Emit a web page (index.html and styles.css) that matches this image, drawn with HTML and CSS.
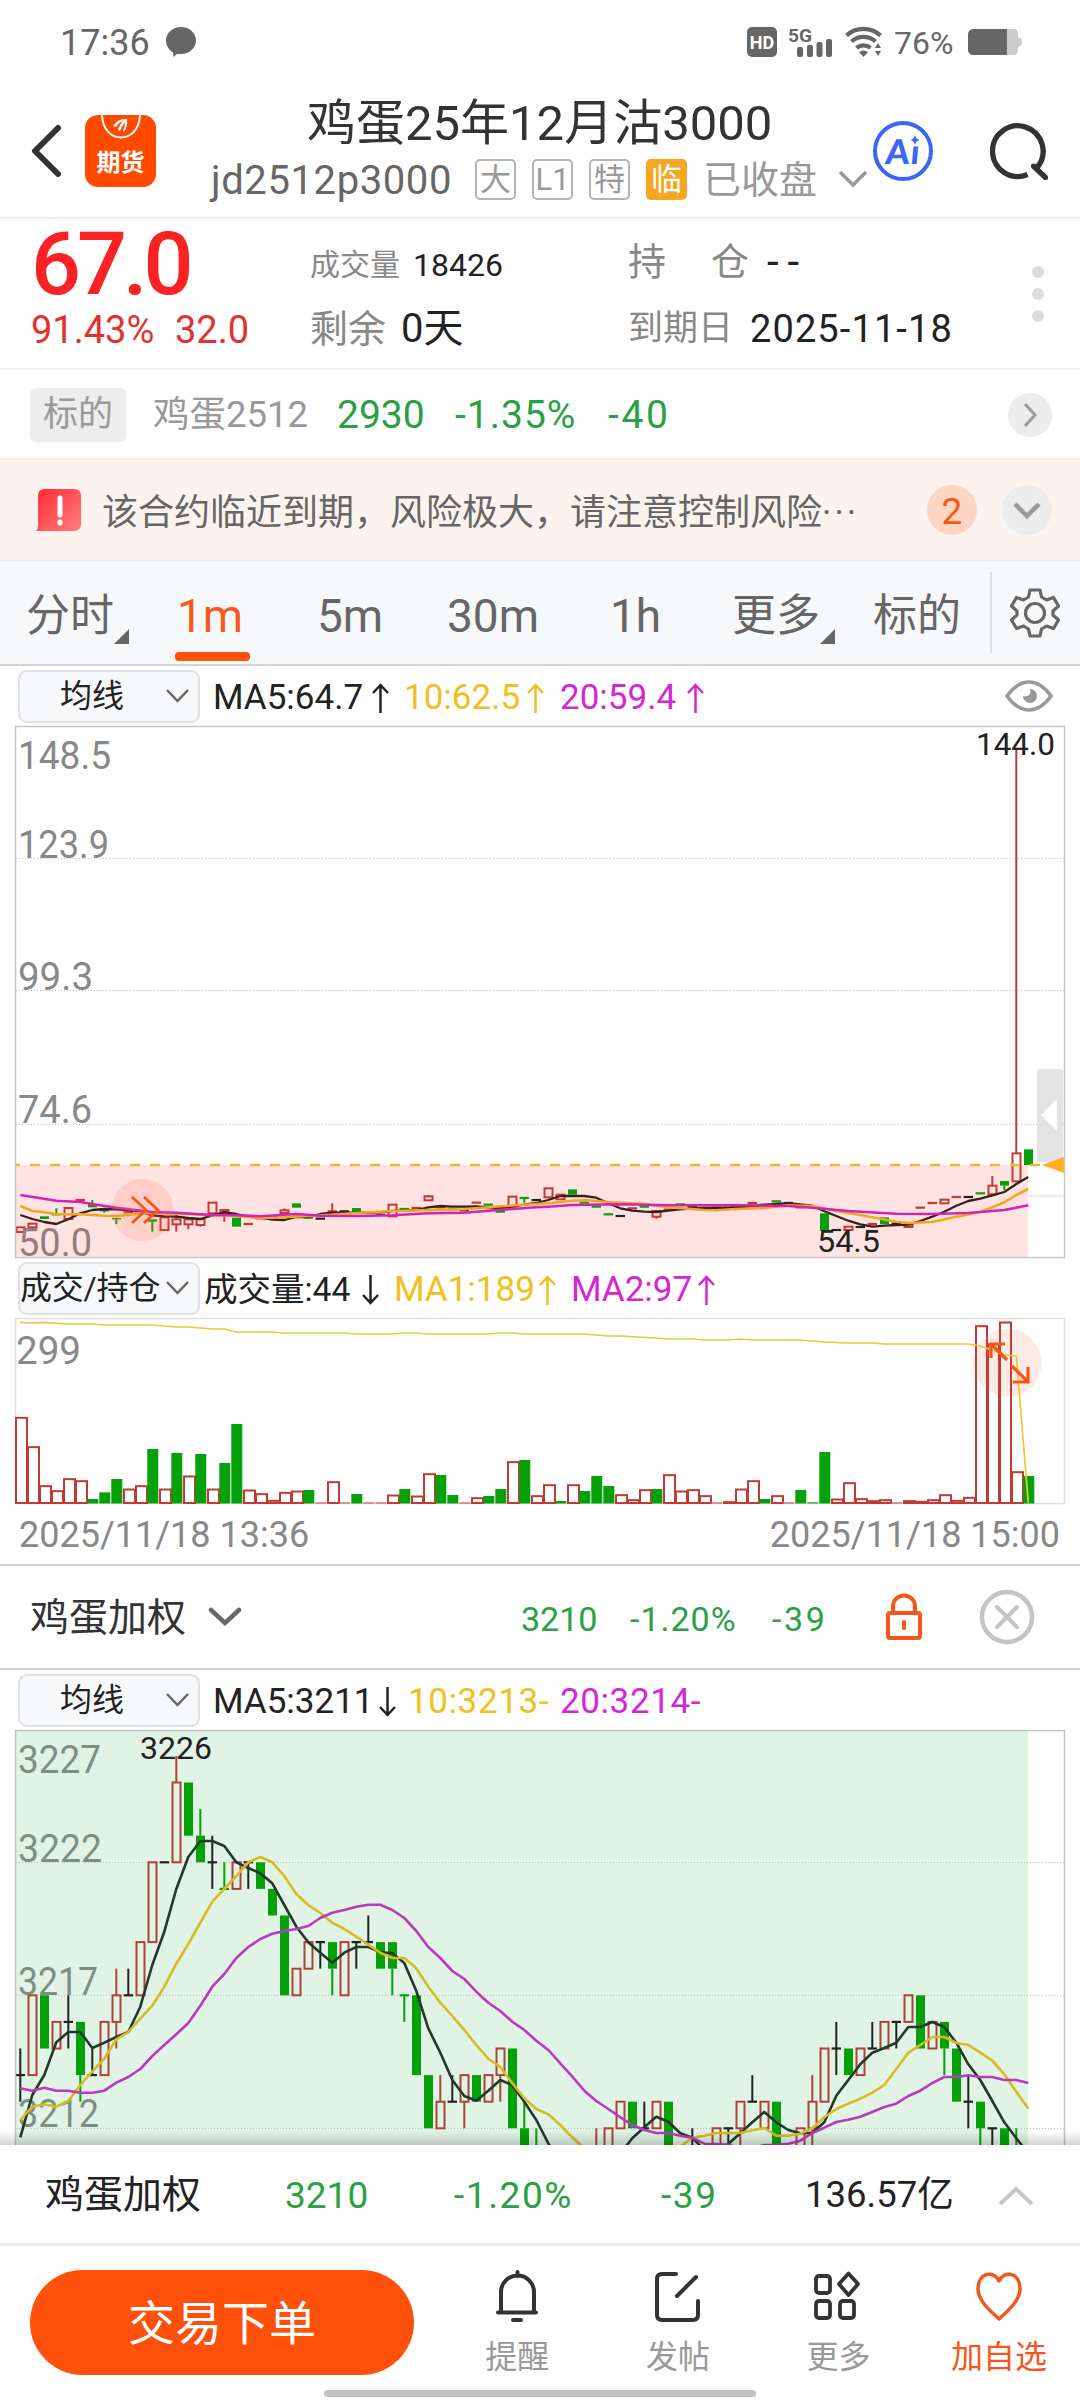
FILE: index.html
```html
<!DOCTYPE html>
<html lang="zh-CN">
<head>
<meta charset="utf-8">
<title>鸡蛋25年12月沽3000</title>
<link rel="stylesheet" href="styles.css">
</head>
<body>
<div class="status">
  <span class="clock">17:36</span>
  <svg class="bubble" width="32" height="32" viewBox="0 0 32 32"><path d="M16 1c8.300 0 15 6 15 13.500S24.300 28 16 28l-4 0-3.500 3L8 26.500C4 24 1 19.500 1 14.500 1 7 7.700 1 16 1z" fill="#666"/></svg>
  <span class="hd">HD</span>
  <svg class="signal" width="46" height="32" viewBox="0 0 46 32"><text x="0" y="16" class="g5" textLength="24" lengthAdjust="spacingAndGlyphs">5G</text><g fill="#666"><rect x="9" y="21" width="6" height="10" rx="2"/><rect x="19" y="19" width="6" height="12" rx="2"/><rect x="28.500" y="16" width="6" height="15" rx="2"/><rect x="38" y="13" width="6" height="18" rx="2"/></g></svg>
  <svg class="wifi" width="40" height="32" viewBox="0 0 40 32"><g fill="none" stroke="#666" stroke-width="4.200"><path d="M2.500 9.500a25 25 0 0 1 34 0"/><path d="M7.500 15.500a18 18 0 0 1 24 0"/><path d="M12.500 21.800a11 11 0 0 1 14 0"/></g><path d="M15 26q4.500-3 9 0l-4.500 5z" fill="#666"/><path d="M31 22l3-5 3 5zM31 25h6l-3 5z" fill="#666"/></svg>
  <span class="pct">76%</span>
  <svg class="battery" width="56" height="28" viewBox="0 0 56 28"><path d="M7 1h40q4 0 4 5v3q4 1 4 5t-4 5v3q0 5-4 5H7q-6 0-6-6V7q0-6 6-6z" fill="#ccc"/><path d="M7 1h33v26H7q-6 0-6-6V7q0-6 6-6z" fill="#666"/></svg>
</div>

<header class="header">
  <svg class="back" width="32" height="54" viewBox="0 0 32 54"><path d="M28 4L5 27l23 23" fill="none" stroke="#333" stroke-width="6" stroke-linecap="round" stroke-linejoin="round"/></svg>
  <div class="logo">
    <svg width="71" height="32" viewBox="0 0 71 32"><path d="M17 0c1 30 37 30 38 0" fill="none" stroke="#fff" stroke-width="2"/><path d="M28 11Q33 3 42 4q1 7-3 13l-1-1q2-5 2-9-3 4-5 9l-2-1q1-5 5-9-5 2-7 6-2 0-3-1z" fill="#fff"/></svg>
    <span>期货</span>
  </div>
  <div class="heading">
    <div class="title">鸡蛋25年12月沽3000</div>
    <div class="sub">
      <span class="code">jd2512p3000</span>
      <span class="tag">大</span><span class="tag">L1</span><span class="tag">特</span><span class="tag solid">临</span>
      <span class="closed">已收盘</span>
      <svg width="30" height="18" viewBox="0 0 30 18"><path d="M2 2l13 13L28 2" fill="none" stroke="#999" stroke-width="3.500"/></svg>
    </div>
  </div>
  <div class="ai"><span>Ai</span><svg width="14" height="14" viewBox="0 0 14 14"><path d="M0 0h13v13H0z" fill="#fefefe"/><path d="M7 2q1 4 4.500 5Q8 8 7 12 6 8 2.500 7 6 6 7 2z" fill="#3a66f5"/></svg></div>
  <svg class="search" width="60" height="60" viewBox="0 0 60 60"><path d="M37.500 53.500A25.300 25.300 0 1 1 47.500 46M43.500 45l12 11.500" fill="none" stroke="#333" stroke-width="5.300"/><circle cx="43.500" cy="45" r="2.600" fill="#333"/><circle cx="55.500" cy="56.500" r="2.600" fill="#333"/></svg>
</header>

<section class="quote">
  <div class="col">
    <div class="price">67.0</div>
    <div class="change"><span>91.43%</span><span>32.0</span></div>
  </div>
  <div class="col">
    <div class="r1 small"><label>成交量</label><b>18426</b></div>
    <div class="r2 left"><label>剩余</label><b>0天</b></div>
  </div>
  <div class="col">
    <div class="r1 hold"><label>持</label><label>仓</label><b class="dash">--</b></div>
    <div class="r2 date"><label>到期日</label><b>2025-11-18</b></div>
  </div>
  <div class="dots"><i></i><i></i><i></i></div>
</section>

<section class="under">
  <span class="utag">标的</span><span class="uname">鸡蛋2512</span><span class="green">2930</span><span class="green neg">-1.35%</span><span class="green neg last">-40</span>
  <span class="go"><svg width="14" height="26" viewBox="0 0 14 26"><path d="M2 2l10 11L2 24" fill="none" stroke="#999" stroke-width="3"/></svg></span>
</section>

<section class="warn">
  <svg class="alert" width="46" height="44" viewBox="0 0 46 44"><defs><linearGradient id="ag" x1="0" y1="0" x2="1" y2="1"><stop offset="0" stop-color="#ff2b33"/><stop offset="1" stop-color="#ff7f80"/></linearGradient></defs><path d="M9 1h29q7 0 7 7v28q0 7-7 7H0q2-2 2-6V8q0-7 7-7z" fill="url(#ag)"/><path d="M24 10v17M24 34v1" stroke="#fff" stroke-width="5" stroke-linecap="round"/></svg>
  <span class="msg">该合约临近到期，风险极大，请注意控制风险<em>···</em></span>
  <span class="count">2</span>
  <span class="fold"><svg width="30" height="18" viewBox="0 0 30 18"><path d="M3 3l12 12L27 3" fill="none" stroke="#999" stroke-width="4.500"/></svg></span>
</section>

<nav class="tabs">
  <span class="cjk drop">分时</span><span class="on">1m</span><span>5m</span><span>30m</span><span>1h</span><span class="cjk drop">更多</span><span class="cjk">标的</span>
  <div class="gear"><svg width="50" height="52" viewBox="0 0 50 52"><g fill="none" stroke="#666" stroke-width="3.200" stroke-linejoin="round"><path d="M20 3h10l1.500 7 5 3 7-2.500 5 8.500-5.500 5v4l5.500 5-5 8.500-7-2.500-5 3L30 49H20l-1.500-7-5-3-7 2.500-5-8.500L7 28v-4l-5.500-5 5-8.500 7 2.500 5-3z"/><circle cx="25" cy="26" r="9.500"/></g></svg></div>
</nav>

<div class="ind">
  <div class="select"><span>均线</span><svg width="23" height="14" viewBox="0 0 23 14"><path d="M1 1l10.500 11L22 1" fill="none" stroke="#666" stroke-width="2.500"/></svg></div>
  <span class="v k">MA5:64.7<svg class="arr" viewBox="0 0 17 30"><path d="M8.500 30V2M1 10l7.500-8L16 10"/></svg></span>
  <span class="v y">10:62.5<svg class="arr" viewBox="0 0 17 30"><path d="M8.500 30V2M1 10l7.500-8L16 10"/></svg></span>
  <span class="v m">20:59.4<svg class="arr" viewBox="0 0 17 30"><path d="M8.500 30V2M1 10l7.500-8L16 10"/></svg></span>
  <svg class="eye" width="48" height="32" viewBox="0 0 48 32"><path d="M2 16Q12 2 24 2t22 14Q36 30 24 30T2 16z" fill="none" stroke="#999" stroke-width="3.500"/><path d="M25 9a7 7 0 1 1-7 7q4 1 6-1t1-6z" fill="#999"/></svg>
</div>
<svg id="main" class="chart" width="1080" height="532" viewBox="0 726 1080 532"></svg>

<div class="ind">
  <div class="select wide"><span>成交/持仓</span><svg width="23" height="14" viewBox="0 0 23 14"><path d="M1 1l10.500 11L22 1" fill="none" stroke="#666" stroke-width="2.500"/></svg></div>
  <span class="v k vol">成交量:44<svg class="arr" viewBox="0 0 17 30"><path d="M8.500 0v28M1 20l7.500 8L16 20"/></svg></span>
  <span class="v y vol1">MA1:189<svg class="arr" viewBox="0 0 17 30"><path d="M8.500 30V2M1 10l7.500-8L16 10"/></svg></span>
  <span class="v m">MA2:97<svg class="arr" viewBox="0 0 17 30"><path d="M8.500 30V2M1 10l7.500-8L16 10"/></svg></span>
</div>
<svg id="volume" class="chart" width="1080" height="186" viewBox="0 1318 1080 186"></svg>
<div class="times"><span>2025/11/18 13:36</span><span>2025/11/18 15:00</span></div>

<section class="second">
  <span class="name">鸡蛋加权</span>
  <svg class="down" width="34" height="20" viewBox="0 0 34 20"><path d="M3 3l14 13L31 3" fill="none" stroke="#666" stroke-width="4.500" stroke-linecap="round"/></svg>
  <span class="green">3210</span><span class="green neg">-1.20%</span><span class="green neg last">-39</span>
  <svg class="lock" width="38" height="48" viewBox="0 0 38 48"><g fill="none" stroke="#f5561c" stroke-width="4"><rect x="3" y="20" width="32" height="25" rx="2"/><path d="M8 20v-7a11 10.500 0 0 1 22 0v7"/><path d="M19 29v6" stroke-linecap="round"/></g></svg>
  <svg class="close" width="56" height="56" viewBox="0 0 56 56"><g fill="none" stroke="#c4c4c4" stroke-width="4.500"><circle cx="28" cy="28" r="25"/><path d="M18 18l20 20M38 18L18 38" stroke-linecap="round" stroke-width="4"/></g></svg>
</section>

<div class="ind">
  <div class="select"><span>均线</span><svg width="23" height="14" viewBox="0 0 23 14"><path d="M1 1l10.500 11L22 1" fill="none" stroke="#666" stroke-width="2.500"/></svg></div>
  <span class="v k k2">MA5:3211<svg class="arr" viewBox="0 0 17 30"><path d="M8.500 0v28M1 20l7.500 8L16 20"/></svg></span>
  <span class="v y y2">10:3213-</span>
  <span class="v m m2">20:3214-</span>
</div>
<div class="clip"><svg id="index" class="chart" width="1080" height="415" viewBox="0 1730 1080 415"></svg></div>

<section class="ticker">
  <span class="wname">鸡蛋加权</span><span class="green">3210</span><span class="green neg">-1.20%</span><span class="green neg last">-39</span><span class="amount">136.57亿</span>
  <svg width="36" height="20" viewBox="0 0 36 20"><path d="M2 18L18 3l16 15" fill="none" stroke="#c8c8c8" stroke-width="4"/></svg>
</section>

<footer class="bar">
  <button class="trade">交易下单</button>
  <div class="item"><svg width="52" height="54" viewBox="0 0 52 54"><g fill="none" stroke="#333" stroke-width="4" stroke-linecap="round"><path d="M10 43V23a16.500 16.500 0 0 1 33 0v20M7 43.500h38M26.500 3v4M22 51h8"/></g></svg><span>提醒</span></div>
  <div class="item"><svg width="52" height="54" viewBox="0 0 52 54"><g fill="none" stroke="#333" stroke-width="4" stroke-linecap="round"><path d="M24 5H10q-5 0-5 5v36q0 5 5 5h31q5 0 5-5V32M25 27L44 8"/></g></svg><span>发帖</span></div>
  <div class="item"><svg width="52" height="54" viewBox="0 0 52 54"><g fill="none" stroke="#333" stroke-width="3.800"><rect x="4" y="7" width="14" height="17" rx="3"/><rect x="4" y="32" width="14" height="17" rx="3"/><rect x="28" y="32" width="14" height="17" rx="3"/><path d="M36.500 4.500L46 15 36.500 26 27 15z" stroke-linejoin="round"/></g></svg><span>更多</span></div>
  <div class="item fav"><svg width="52" height="54" viewBox="0 0 52 54"><path d="M26 12C22 2 5 2 5 20c0 11 11 21 21 30 10-9 21-19 21-30C47 2 30 2 26 12z" fill="none" stroke="#f5561c" stroke-width="3.500" stroke-linejoin="round"/></svg><span>加自选</span></div>
  <i class="home"></i>
</footer>
<script src="charts.js"></script>
</body>
</html>
```

FILE: styles.css
```css
* { box-sizing: border-box; }
body {
  margin: 0;
  width: 1080px;
  height: 2400px;
  overflow: hidden;
  background: #fefefe;
  color: #222;
  font-family: Roboto, "Noto Sans CJK SC", sans-serif;
  font-size: 38px;
  line-height: 1;
}
svg { display: block; flex: none; }
span, b, label { white-space: nowrap; }
b { font-weight: 400; }
.green { color: #2aa044; font-size: 39px; }
.neg { letter-spacing: 1px; }
.neg.last { letter-spacing: 2.6px; }

.status { height: 84px; display: flex; align-items: center; padding-left: 60px; color: #666; }
.clock { width: 105px; font-size: 36px; padding-top: 1px; }
.bubble { margin-right: 550px; }
.hd { width: 30px; height: 30px; border-radius: 5px; background: #666; color: #fff; font: 700 18px/31px Roboto, sans-serif; text-align: center; margin-right: 11px; }
.signal { margin-right: 10px; overflow: visible; }
.g5 { font: 700 19px Roboto, sans-serif; fill: #666; }
.wifi { margin-right: 10px; }
.pct { width: 73px; font-size: 32px; padding-top: 2px; }

.header { height: 135px; display: flex; align-items: center; border-bottom: 2px solid #eee; padding-left: 30px; }
.back { margin-right: 23px; }
.logo { width: 71px; height: 72px; border-radius: 13px; background: #ff4a00; color: #fff; overflow: hidden; text-align: center; font-size: 24px; font-weight: 700; line-height: 32px; }
.heading { width: 717px; }
.title { padding: 2px 0 0 151px; font-size: 49px; line-height: 55px; color: #333; white-space: nowrap; }
.sub { height: 57px; padding-left: 55px; display: flex; align-items: center; }
.code { width: 264px; padding-top: 4px; font-size: 40px; letter-spacing: .6px; color: #666; }
.tag { width: 41px; height: 41px; margin-right: 16px; border: 2px solid #b4b4b4; border-radius: 5px; font-size: 31px; line-height: 38px; text-align: center; color: #999; }
.tag.solid { background: #f5a623; border-color: #f5a623; color: #fff; }
.closed { width: 135px; padding-top: 2px; color: #999; }
.ai { width: 60px; height: 60px; margin-right: 57px; border: 4px solid #3a66f5; border-radius: 50%; display: flex; justify-content: center; align-items: center; color: #3a66f5; font: 900 34px/34px Lato, sans-serif; position: relative; }
.ai span { transform: skewX(-5deg); letter-spacing: 1px; }
.ai svg { position: absolute; right: 7px; top: 8px; }

.quote { height: 151px; display: grid; grid-template-columns: 279px 318px 398px 12px; padding-left: 31px; border-bottom: 2px solid #f4f4f4; }
.price { height: 90px; font-size: 88px; line-height: 90px; font-weight: 500; letter-spacing: -4px; color: #fa2222; }
.change { padding-top: 2px; line-height: 38px; color: #e33030; display: grid; grid-template-columns: 144px auto; }
.r1 { height: 92px; line-height: 92px; display: grid; }
.r2 { line-height: 36px; display: grid; }
label { color: #888; }
.small { font-size: 32px; grid-template-columns: 103px auto; }
.small label { font-size: 30px; }
.left { grid-template-columns: 91px auto; }
.left b { font-size: 40px; }
.hold { grid-template-columns: 83px 56px auto; line-height: 86px; }
.dash { letter-spacing: 9px; font-size: 42px; }
.date { grid-template-columns: 122px auto; }
.date label { font-size: 35px; }
.date b { letter-spacing: 1.1px; }
.dots { padding-top: 47px; display: flex; flex-direction: column; gap: 10px; }
.dots i { width: 12px; height: 12px; border-radius: 50%; background: #ddd; margin-left: 6px; }

.under { height: 90px; display: grid; grid-template-columns: 123px 184px 118px 153px 400px 44px; align-items: center; padding: 2px 0 0 30px; border-bottom: 2px solid #f0eeee; }
.utag { width: 96px; height: 54px; border-radius: 6px; background: #ededed; color: #999; font-size: 35px; line-height: 54px; text-align: center; }
.uname { color: #999; font-size: 36.500px; }
.go, .fold, .count { border-radius: 50%; background: #ececec; display: flex; align-items: center; justify-content: center; }
.go { width: 44px; height: 44px; }

.warn { height: 101px; display: flex; align-items: center; background: #fdf3ee; padding-left: 36px; border-bottom: 1px solid #eee; }
.alert { margin-right: 20px; }
.msg { width: 825px; font-size: 36px; line-height: 36px; color: #666; padding-top: 5px; }
.msg em { font-style: normal; letter-spacing: 3px; }
.count { width: 50px; height: 50px; margin-right: 25px; background: #fcd5c3; color: #ff5510; font-size: 37px; padding-top: 2px; }
.fold { width: 50px; height: 50px; }

.tabs { height: 105px; display: grid; grid-template-columns: 151px 140px 130px 163px 122px 141px 117px 90px; align-items: center; padding-left: 26px; background: #f7f8fa; border-bottom: 2px solid #d2d4d6; color: #666; font-size: 46px; }
.tabs span { padding-top: 6px; }
.tabs .cjk { font-size: 44px; }
.drop, .on { position: relative; }
.drop::after { content: ""; position: absolute; left: 88px; top: 41px; border-left: 15px solid transparent; border-bottom: 15px solid #666; }
.on { color: #f95a1c; }
.on::after { content: ""; position: absolute; left: -2px; top: 65px; width: 75px; height: 9px; border-radius: 4px; background: #ff500c; }
.gear { height: 81px; border-left: 2px solid #dcdee0; display: flex; align-items: center; padding-left: 18px; }

.ind { height: 60px; display: flex; align-items: center; padding-left: 18px; font-size: 35px; }
.select { width: 182px; height: 53px; margin-right: 13px; border: 2px solid #dfe1e4; border-radius: 9px; background: #f7f8fa; display: flex; align-items: center; justify-content: space-between; padding: 0 9px 0 40px; font-size: 32px; }
.select.wide { padding-left: 0; margin-right: 4px; }
.select.wide span { letter-spacing: -.2px; }
.v { display: flex; align-items: center; justify-content: space-between; padding-top: 3px; }
.arr { width: 17px; height: 30px; fill: none; stroke: currentColor; stroke-width: 2.500; }
.k { width: 176px; margin-right: 15px; }
.y { width: 140px; margin-right: 16px; color: #f0c020; }
.m { width: 144px; color: #d426d4; }
.vol { width: 175px; margin-right: 15px; font-size: 33.500px; }
.vol1 { width: 162px; margin-right: 15px; }
.k2 { width: 183px; margin-right: 12px; }
.y2 { width: 136px; margin-right: 16px; letter-spacing: .6px; }
.m2 { letter-spacing: .6px; }
.eye { margin-left: 301px; }

.chart { overflow: visible; }
.chart text { font-family: Roboto, sans-serif; fill: #888; font-size: 38px; }
.chart .peak { fill: #222; font-size: 31px; }
.times { height: 60px; display: flex; justify-content: space-between; align-items: center; padding: 2px 20px 0 19px; color: #888; font-size: 36px; }

.second { height: 106px; display: flex; align-items: center; border-top: 2px solid #d0d0d0; border-bottom: 2px solid #d0d0d0; padding-left: 30px; color: #333; }
.second span { padding-top: 3px; }
.name { width: 178px; font-size: 39px; }
.down { margin-right: 279px; }
.second .green { font-size: 34px; width: 109px; }
.second .green.neg { width: 142px; }
.second .green.last { width: 113px; }
.lock { margin-right: 56px; }

.clip { position: relative; height: 415px; overflow: hidden; }
.clip::after { content: ""; position: absolute; left: 0; right: 0; bottom: 0; height: 14px; background: linear-gradient(rgba(0,0,0,0), rgba(0,0,0,.16)); }

.ticker { height: 101px; display: grid; grid-template-columns: 240px 169px 207px 144px 193px 40px; align-items: center; padding: 3px 0 0 45px; border-bottom: 3px solid #ececec; }
.ticker .green { font-size: 37px; }
.ticker .neg { letter-spacing: 1.6px; }
.wname { font-size: 39px; }
.amount { font-size: 36.500px; }

.bar { height: 154px; display: grid; grid-template-columns: 407px repeat(4, 160.600px); padding-left: 30px; position: relative; }
.trade { width: 384px; height: 105px; margin: 24px 0 0; padding: 0; border: 0; border-radius: 53px; background: #ff500c; color: #fff; font: 47px/107px Roboto, "Noto Sans CJK SC", sans-serif; }
.item { padding-top: 23px; display: flex; flex-direction: column; align-items: center; font-size: 32px; color: #999; }
.item span { margin-top: 18px; }
.fav { color: #f5561c; }
.home { position: absolute; left: 324px; top: 144px; width: 432px; height: 7px; border-radius: 4px; background: #c2c2c2; }
```

FILE: charts.js
```js
const RED = '#c23a34', GREEN = '#05a10a', INK = '#222';
const X = i => 20.3 + 12 * i;

const el = (name, attrs, text) => {
  const a = Object.entries(attrs).map(([k, v]) => `${k}="${v}"`).join(' ');
  return `<${name} ${a}>${text || ''}</${name}>`;
};
const rect = (x, y, width, height, fill, extra) => el('rect', { x, y, width, height, fill, ...extra });
const seg = (x1, y1, x2, y2, stroke, w = 2, extra) => el('line', { x1, y1, x2, y2, stroke, 'stroke-width': w, ...extra });
const label = (x, y, s, w, cls = '') => el('text', { x, y, textLength: w, lengthAdjust: 'spacingAndGlyphs', class: cls }, s);
const dotted = y => seg(16, y, 1064, y, '#bcc2bc', 1, { 'stroke-dasharray': '1 2' });

// "index:y" pairs, or a bare y for the next index
function curve(src, y, color, w = 2.6) {
  let i = -1;
  const pts = src.trim().split(/\s+/).map(t => {
    const p = t.split(':');
    i = p.length > 1 ? +p[0] : i + 1;
    return `${X(i).toFixed(1)},${y(+p[p.length - 1]).toFixed(1)}`;
  });
  return el('polyline', { points: pts.join(' '), fill: 'none', stroke: color, 'stroke-width': w, 'stroke-linejoin': 'round' });
}

function candle(i, kind, a, b, hi, lo) {
  const x = X(i), color = kind === 'r' ? RED : kind === 'g' ? GREEN : INK;
  const top = Math.min(a, b), bot = Math.max(a, b);
  let s = '';
  if (hi < top) s += seg(x, hi, x, top, color);
  if (lo > bot) s += seg(x, bot, x, lo, color);
  if (bot - top < 1.2) s += seg(x - 4.7, top, x + 4.7, top, color, 2.2);
  else if (kind === 'r') s += rect(x - 3.8, top, 8, bot - top, 'none', { stroke: RED, 'stroke-width': 2 });
  else s += rect(x - 4.3, top, 9, bot - top, color);
  return s;
}

/* option price */
{
  const y = v => 1130 + v / 3;
  let s = rect(16, 1165, 1012, 92, '#ffe3e3');
  s += [858.5, 990.5, 1124.5].map(dotted).join('') + seg(1028, 1196, 1064, 1196, '#e6e6e6', 1.5);
  s += label(18, 769, '148.5', 93) + label(18, 858, '123.9', 91) + label(18, 990, '99.3', 75) + label(18, 1123, '74.6', 74);
  const data = `0 r 292 306|1 r 281 292 281 298|2 g 259 267|3 g 253 254 235 253|4 r 234 267|5 r 210 210|6 g 222 232 210 232|7 g 241 241 241 248|8 g 264 268 264 282|9 r 247 247|10 r 243 243|11 g 268 275 268 305|12 r 262 300|13 r 268 283 255 305|14 r 268 283 268 298|15 r 268 285 268 290|16 r 218 250|17 r 240 246 240 275|18 g 263 290|19 r 282 282|20 r 265 265|21 r 262 262|22 r 241 249 235 249|23 g 220 233|24 g 263 263|25 k 266 266|26 r 244 244 220 248|27 k 244 244|28 g 234 248|29 r 258 258|30 k 255 255|31 r 224 259|32 g 237 237|33 r 234 234|34 r 199 211 195 211|35 r 232 232|36 g 238 238|37 k 241 241|38 r 218 218|39 g 224 224|40 g 245 245|41 r 200 230|42 g 204 206 204 218|43 k 210 210|44 r 175 202|45 r 194 208|46 g 178 194|47 g 218 218|48 g 230 230|49 g 253 253|50 k 258 258|51 r 235 235|52 g 230 230|53 r 243 260 243 266|54 r 239 239|55 g 223 223|56 k 230 230|57 r 235 235|58 k 233 233|59 k 233 233|60 r 230 230|61 r 219 219|62 g 224 224|63 g 214 214|64 k 219 219|65 r 232 232|67 g 250 303|68 k 300 300|69 r 290 300|70 k 291 291|71 r 282 282|72 g 262 282|73 k 281 281|74 r 284 291|75 r 233 233|76 r 219 219|77 r 209 220|78 r 201 201|79 k 201 201|80 g 190 190|81 r 167 193 138 193|82 g 153 167 153 180|83 r 70 154 -1140 154|84 g 58 105`;
  for (const row of data.split('|')) {
    const [i, k, a, b, h = Math.min(a, b), l = Math.max(a, b)] = row.split(' ');
    s += candle(+i, k, y(+a), y(+b), y(+h), y(+l));
  }
  s += curve('255 267 276 282 268 250 240 237 238 241 245 256 259 260 264 267 256 247 252 260 263 269 270 261 261 252 248 248 248 248 247 243 241 240 232 228 230 230 229 232 234 230 224 219 210 198 198 198 203 220 235 242 245 246 242 238 235 234 234 233 231 228 225 222 220 223 227 244 258 272 283 290 287 285 284 273 260 245 227 213 206 196 186 162 141', y, '#3a1f1f', 2.3);
  s += curve('228 243 247 252 253 253 255 257 258 255 250 250 12:250 14:252 16:256 18:257 20:264 22:262 24:258 26:254 28:249 31:243 34:240 37:238 40:229 43:222 44:220 46:212 47:210 49:216 52:222 54:232 57:240 58:241 60:236 62:234 64:226 66:228 68:243 70:255 73:275 74:279 76:276 78:260 80:246 81:232 82:217 83:195 84:177', y, '#f0a81c');
  s += curve('0:195 3:212 5:216 6:222 8:233 11:246 13:248 16:255 18:256 20:259 23:252 25:257 28:258 31:256 34:250 37:248 39:242 41:237 43:232 44:230 46:225 50:223 54:226 60:226 64:228 66:233 69:243 73:251 76:252 79:249 82:240 84:226', y, '#d422b8');
  s += label(18, 1256, '50.0', 74).replace('<text', '<text style="fill:#967c7c"');
  s += label(817, 1252, '54.5', 63, 'peak') + label(976, 755, '144.0', 79, 'peak');
  s += seg(16, 1165, 1044, 1165, '#f5b335', 2.3, { 'stroke-dasharray': '10 10', 'stroke-dashoffset': 6 });
  s += el('circle', { cx: 142.5, cy: 1210, r: 31, fill: 'rgba(255,110,70,.18)' });
  s += el('path', { d: 'M132 1197l14 13-14 13M144 1197l14 13-14 13', fill: 'none', stroke: '#f5561c', 'stroke-width': 2.8 });
  s += rect(1037, 1069, 26, 93, '#e3e3e3', { rx: 3 }) + el('path', { d: 'M1041 1115l16-16v32z', fill: '#fff' });
  s += el('path', { d: 'M1042 1165l22-8v16z', fill: '#ffb020' });
  s += rect(15.5, 726.5, 1049, 531, 'none', { stroke: '#c8c8c8', 'stroke-width': 1.5 });
  document.getElementById('main').innerHTML = s;
}

/* volume and open interest */
{
  const y = v => 1130 + v / 3;
  const bars = 'r862 r950 r1067 r1082 r1046 r1052 g1107 g1087 g1047 r1077 r1067 g957 r1077 g969 r1038 g972 r1077 g999 g882 r1080 r1091 r1111 r1087 r1083 g1080 r1118 r1055 r1118 g1092 r1118 r1118 r1095 g1077 r1098 r1031 g1035 g1095 r1118 r1103 g1098 g1077 r995 g990 r1097 r1064 g1113 r1064 g1083 g1038 g1068 r1094 r1109 r1079 g1077 r1034 r1083 r1079 r1097 r1118 r1115 r1077 r1052 g1107 r1097 r1118 g1080 g1117 g966 r1107 r1058 r1106 r1112 r1109 r1118 r1112 r1114 r1109 r1094 r1111 r1102 r587 r641 r576 r1025 g1038'.split(' ');
  let s = rect(15.5, 1318.5, 1049, 185, 'none', { stroke: '#e0e0e0', 'stroke-width': 1.5 });
  s += label(16, 1364, '299', 65);
  bars.forEach((t, i) => {
    const top = y(+t.slice(1)), h = 1503.5 - top;
    s += t[0] === 'g' ? rect(X(i) - 5, top, 11, h, GREEN)
      : h < 1.5 ? seg(X(i) - 5, 1503, X(i) + 6, 1503, '#cf7a76', 1.5)
      : rect(X(i) - 4.3, top + .5, 11, h - 1, '#fff', { stroke: RED, 'stroke-width': 2 });
  });
  s += el('circle', { cx: 1007.6, cy: 1362.7, r: 34, fill: 'rgba(255,90,40,.12)' });
  s += curve('577 579 577 4:582 6:582 7:585 11:585 12:588 13:591 14:591 16:597 17:597 18:606 21:606 22:609 27:609 28:612 31:612 32:609 33:609 34:612 39:612 40:609 41:609 42:612 47:612 49:618 50:618 53:624 54:627 56:627 57:630 59:630 60:627 61:630 65:630 67:636 69:639 71:639 72:642 79:642 80:648 81:660 82:675 83:678 84:1118', y, '#e8ca38', 1.7);
  s += el('path', { d: 'M1005 1344h-14v14M991 1344l16 16M1013 1382h15v-15M1028 1382l-16-16', fill: 'none', stroke: '#fa5517', 'stroke-width': 3.2 });
  document.getElementById('volume').innerHTML = s;
}

/* weighted index */
{
  const p = v => 1862.3 + (3222 - v) * 26.6, y = v => 1720 + v / 3;
  let s = rect(16, 1731, 1012, 414, '#e1f3e5');
  s += [3222, 3217, 3212].map(v => dotted(Math.floor(p(v)) + .5)).join('');
  const g = t => t.replace('<text', '<text style="fill:#7d8f80"');
  s += g(label(18, 1773, '3227', 83)) + g(label(18, 1862, '3222', 84)) + g(label(18, 1995, '3217', 80)) + g(label(18, 2127, '3212', 81));
  s += label(140, 1759, '3226', 72, 'peak');
  // index, kind, open/close, high, low as offsets from 3200
  const data = `0 k 14 14 15 13|1 r 14 17|2 g 17 15|3 r 15 16|4 k 16 16 17 15|5 g 16 14 16 13|6 k 14 14 15 14|7 r 14 16|8 r 16 17 18 15|9 k 17 17 18 17|10 r 17 19|11 r 19 22|12 k 22 22|13 r 22 25 26 22|14 g 25 23|15 g 23 22 24 22|16 k 22 22 23 21|17 g 21 21 22 21|18 r 21 22|19 k 22 22 22 21|20 g 22 21|21 g 21 20|22 g 20 17|23 r 17 18|24 r 18 19|25 k 19 19 19 18|26 g 19 18 19 17|27 r 17 19|28 k 19 19 19 18|29 k 19 19 20 19|30 g 19 18|31 g 19 18 19 17|32 g 17 17 17 16|33 g 17 14|34 g 14 12|35 r 12 13 14 12|36 k 13 13 14 13|37 r 13 14 14 12|38 g 14 13|39 r 13 14|40 r 14 15 15 13|41 g 15 12|42 g 12 10 13 10|43 g 11 10 12 10|48 r 10 11 12 10|49 r 10 12|50 r 12 13|51 g 13 12|52 k 12 12 13 12|53 r 12 13|54 g 13 10|56 k 11 11 12 10|58 r 10 12|59 k 12 12 12 10|60 r 12 13 13 10|61 k 13 13 14 13|62 r 12 13|63 g 13 10|65 r 10 12|66 r 12 13 14 10|67 r 13 15|68 k 15 15 16 14|69 g 15 14|70 r 14 15|71 k 15 15 16 15|72 r 15 16|73 k 16 16 16 15|74 r 16 17|75 g 17 15|76 r 15 16|77 g 16 15 16 14|78 g 15 13|79 k 13 13 14 12|80 g 13 12 13 10|81 k 12 12 12 10|82 g 12 10|83 g 11 10 12 10`;
  for (const row of data.split('|')) {
    const t = row.split(' '), [a, b] = [+t[2], +t[3]];
    const h = t[4] ? +t[4] : Math.max(a, b), l = t[5] ? +t[5] : Math.min(a, b);
    s += candle(+t[0], t[1], p(3200 + a), p(3200 + b), p(3200 + h), p(3200 + l)).replaceAll(RED, '#ab4438');
  }
  s += curve('1252 1125 1065 967 936 936 984 976 968 951 936 860 735 635 507 411 363 363 378 427 444 460 490 555 620 667 698 728 698 681 681 696 700 729 813 925 998 1080 1128 1142 1112 1080 1095 1145 1200 1270 1330 49:1340 50:1300 1255 1222 1190 1205 1240 1253 1290 1290 1272 1240 1207 1176 1207 1230 1240 1238 1207 1127 1080 1033 998 984 968 921 921 906 921 968 1033 1080 1143 1207 1255 1300'.replace('984 976 968 951 936 860', '984 968 951 936 860'), y, '#22382a');
  s += curve('1200 1160 1153 1160 1143 1095 1055 1016 958 936 896 857 800 731 672 608 545 507 468 427 411 427 468 522 555 579 608 627 650 674 698 714 714 745 800 848 888 930 975 1016 1041 1090 1135 1167 1183 1215 1252 1285 48:1330 54:1310 55:1280 1253 1247 1239 1239 1239 1231 1224 1247 1247 1241 1225 1192 1167 1151 1136 1118 1095 1047 998 975 951 951 969 975 998 1022 1063 1115 1166', y, '#d6bc22');
  s += curve('1105 1112 1103 1112 1112 1118 1118 1112 1088 1071 1047 1008 975 943 909 857 800 762 714 681 657 641 633 627 618 594 578 570 560 554 554 570 594 633 681 714 753 777 815 848 873 905 930 962 990 1030 1070 1112 1143 1167 1192 1215 1230 1239 1239 1247 1253 1271 1272 1274 1285 1285 1275 1275 1271 1262 1239 1223 1206 1199 1190 1176 1161 1151 1128 1112 1089 1071 1071 1066 1071 1071 1080 1080 1089', y, '#b83abf');
  s += el('path', { d: 'M15.500 2146V1730.500H1064.500V2146', fill: 'none', stroke: '#bcc6be', 'stroke-width': 1.5 });
  document.getElementById('index').innerHTML = s;
}
```
